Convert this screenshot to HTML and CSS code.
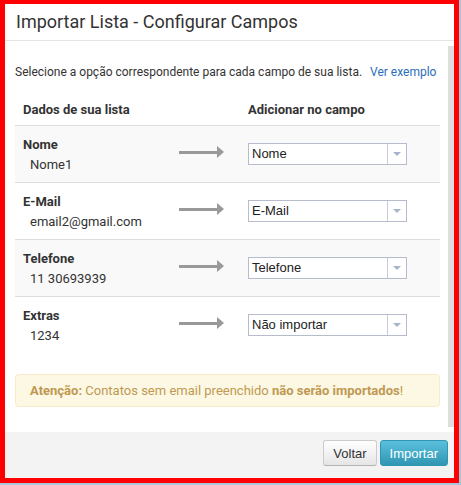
FILE: index.html
```html
<!DOCTYPE html>
<html>
  <head>
    <title>Importar Lista</title>
    <link rel="stylesheet" href="styles.css">
  </head>
  <body>
    <div class="frame">

      <div class="modal-header">
        <h3>Importar Lista - Configurar Campos</h3>
      </div>

      <div class="modal-body-wrap">
        <div class="modal-body">

          <p class="intro">
            Selecione a opção correspondente para cada campo de sua lista.
            <a href="#">Ver exemplo</a>
          </p>

          <div class="fields">
            <div class="field-row head">
              <div>Dados de sua lista</div>
              <div></div>
              <div>Adicionar no campo</div>
            </div>

            <div class="field-row odd">
              <div class="source">
                <div class="source-name">Nome</div>
                <div class="source-value">Nome1</div>
              </div>
              <div class="arrow"><span class="shaft"></span><span class="head-tip"></span></div>
              <div class="select"><span class="select-text">Nome</span><span class="caret"></span></div>
            </div>

            <div class="field-row">
              <div class="source">
                <div class="source-name">E-Mail</div>
                <div class="source-value">email2@gmail.com</div>
              </div>
              <div class="arrow"><span class="shaft"></span><span class="head-tip"></span></div>
              <div class="select"><span class="select-text">E-Mail</span><span class="caret"></span></div>
            </div>

            <div class="field-row odd">
              <div class="source">
                <div class="source-name">Telefone</div>
                <div class="source-value">11 30693939</div>
              </div>
              <div class="arrow"><span class="shaft"></span><span class="head-tip"></span></div>
              <div class="select"><span class="select-text">Telefone</span><span class="caret"></span></div>
            </div>

            <div class="field-row">
              <div class="source">
                <div class="source-name">Extras</div>
                <div class="source-value">1234</div>
              </div>
              <div class="arrow"><span class="shaft"></span><span class="head-tip"></span></div>
              <div class="select"><span class="select-text">Não importar</span><span class="caret"></span></div>
            </div>
          </div>

          <div class="alert">
            <b>Atenção:</b> Contatos sem email preenchido <b>não serão importados</b>!
          </div>

        </div>
        <div class="scrollbar"></div>
      </div>

      <div class="modal-footer">
        <button class="btn">Voltar</button>
        <button class="btn btn-info">Importar</button>
      </div>

    </div>
  </body>
</html>
```

FILE: styles.css
```css
body {
    margin: 0;
    padding: 0;
    background-color: #a9c4dc;
    font-family: Roboto, "Liberation Sans", sans-serif;
    color: #333333;
}

.frame {
    width: 449px;
    height: 474px;
    border: 5px solid #ff0000;
    border-top-width: 4px;
    background-color: #ffffff;
    display: flex;
    flex-direction: column;
}

.modal-header {
    height: 36px;
    border-bottom: 1px solid #e5e5e5;
    padding: 0 11px;
}

.modal-header h3 {
    margin: 0;
    font-size: 18px;
    font-weight: 400;
    line-height: 30px;
    padding-top: 3px;
    color: #333333;
}

.modal-body-wrap {
    flex: 1;
    display: flex;
    flex-direction: row;
}

.modal-body {
    flex: 1;
    padding: 0 8px 0 10px;
}

.scrollbar {
    width: 6px;
    margin-top: 5px;
    margin-bottom: 5px;
    background-color: #dedede;
}

.intro {
    margin: 22px 0 0 0;
    font-size: 12px;
    line-height: 18px;
    white-space: nowrap;
}

.intro a {
    color: #2a6ebb;
    text-decoration: none;
    margin-left: 5px;
}

.fields {
    margin-top: 13px;
}

.field-row {
    display: grid;
    grid-template-columns: 156px 69px 159px;
    padding-left: 8px;
    height: 56px;
    border-top: 1px solid #dddddd;
    font-size: 13px;
}

.field-row.head {
    height: 31px;
    border-top: none;
    font-weight: 700;
    align-items: center;
}

.odd {
    background-color: #f9f9f9;
}

.source {
    padding-top: 10px;
}

.source-name {
    font-weight: 700;
    line-height: 18px;
}

.source-value {
    padding-left: 7px;
    line-height: 20px;
    margin-top: 1px;
}

.arrow {
    display: flex;
    align-items: center;
    height: 56px;
    margin-top: -2px;
}

.shaft {
    width: 38px;
    height: 3px;
    background-color: #999999;
}

.head-tip {
    width: 0;
    height: 0;
    border-top: 6px solid transparent;
    border-bottom: 6px solid transparent;
    border-left: 7px solid #999999;
}

.select {
    margin-top: 17px;
    height: 20px;
    border: 1px solid #b7bccc;
    background-color: #ffffff;
    display: flex;
    flex-direction: row;
    font-family: "Liberation Sans", Arial, sans-serif;
    font-size: 13px;
}

.select-text {
    flex: 1;
    line-height: 20px;
    padding-left: 3px;
    color: #222222;
}

.caret {
    width: 18px;
    border-left: 1px solid #c8ccd8;
    position: relative;
}

.caret::after {
    content: "";
    position: absolute;
    left: 5px;
    top: 8px;
    border-left: 4px solid transparent;
    border-right: 4px solid transparent;
    border-top: 4px solid #a8b4cc;
}

.alert {
    margin-top: 21px;
    height: 31px;
    border: 1px solid #f7ebcc;
    border-radius: 4px;
    background-color: #fcf8e3;
    color: #c09853;
    font-size: 13px;
    line-height: 31px;
    padding-left: 14px;
}

.modal-footer {
    height: 46px;
    background-color: #f3f3f3;
    display: flex;
    flex-direction: row;
    justify-content: flex-end;
    align-items: flex-start;
    padding-right: 6px;
    gap: 3px;
}

.btn {
    margin-top: 8px;
    height: 26px;
    font-family: "Liberation Sans", Arial, sans-serif;
    font-size: 13px;
    color: #333333;
    padding: 0 9px;
    border: 1px solid #cccccc;
    border-bottom-color: #b3b3b3;
    border-radius: 3px;
    background: linear-gradient(#ffffff, #e6e6e6);
}

.btn-info {
    color: #ffffff;
    border-color: #2f96b4;
    background: linear-gradient(#5bc0de, #2f96b4);
}
```
